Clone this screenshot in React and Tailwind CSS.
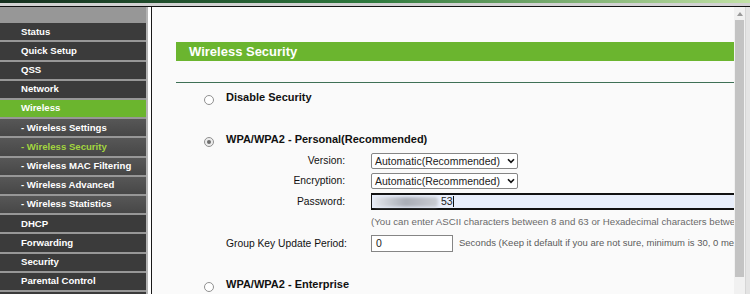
import React from 'react'

const MENU = [
  { label: 'Status' },
  { label: 'Quick Setup' },
  { label: 'QSS' },
  { label: 'Network' },
  { label: 'Wireless', active: true },
  { label: '- Wireless Settings', sub: true },
  { label: '- Wireless Security', sub: true, current: true },
  { label: '- Wireless MAC Filtering', sub: true },
  { label: '- Wireless Advanced', sub: true },
  { label: '- Wireless Statistics', sub: true },
  { label: 'DHCP' },
  { label: 'Forwarding' },
  { label: 'Security' },
  { label: 'Parental Control' },
  { label: '' },
]

function MenuItem({ item }) {
  let bg = 'bg-[#3b3b3b]'
  if (item.active) bg = 'bg-[#6bb52e]'
  else if (item.sub) bg = 'bg-gradient-to-b from-[#575757] to-[#474747]'
  return (
    <div className={`h-[19.2px] shrink-0 border-t-2 border-[#979797] flex items-center pl-[21px] ${bg}`}>
      <span
        className={`text-[9.6px] font-bold whitespace-nowrap ${item.current ? 'text-[#a3d63f]' : 'text-white'}`}
      >
        {item.label}
      </span>
    </div>
  )
}

function Radio({ checked }) {
  return (
    <div
      className={`mt-[5px] w-[10px] h-[10px] shrink-0 rounded-full border border-[#909090] flex items-center justify-center ${
        checked ? 'bg-[#ececec]' : 'bg-white'
      }`}
    >
      {checked && <div className="w-[4px] h-[4px] rounded-full bg-[#6e6e6e]" />}
    </div>
  )
}

function FakeSelect() {
  return (
    <div className="w-[147px] h-[16px] shrink-0 border border-[#858585] rounded-[2px] bg-white flex items-center justify-between pl-[3px] pr-[2px]">
      <span className="text-[10.5px] text-[#222] leading-none">Automatic(Recommended)</span>
      <svg width="8" height="6" viewBox="0 0 8 6">
        <path d="M1 1.2 L4 4.3 L7 1.2" fill="none" stroke="#111" strokeWidth="1.6" />
      </svg>
    </div>
  )
}

function FormRow({ label, children, h }) {
  return (
    <div className={`flex items-center ${h}`}>
      <div className="w-[119px] shrink-0 text-right text-[10.3px] text-[#111] whitespace-nowrap">{label}</div>
      <div className="ml-[26px] flex items-center">{children}</div>
    </div>
  )
}

export default function App() {
  return (
    <div className="w-[750px] h-[294px] overflow-hidden bg-[#fafafa] flex flex-col font-['Liberation_Sans',Arial,sans-serif]">
      {/* top strip */}
      <div className="h-[3px] shrink-0 bg-gradient-to-r from-[#16301f] via-[#2e7a3e] to-[#c2e2a6]" />
      <div className="h-[3px] shrink-0 bg-[#d2d2d2]" />
      <div className="h-px shrink-0 bg-[#111]" />

      <div className="flex flex-1 min-h-0">
        {/* sidebar */}
        <aside className="w-[146px] shrink-0 flex flex-col bg-[#3b3b3b] overflow-hidden">
          <div className="h-[14.3px] shrink-0 bg-[#979797]" />
          {MENU.map((item, i) => (
            <MenuItem key={i} item={item} />
          ))}
        </aside>
        <div className="w-[2px] shrink-0 bg-[#b4b4b4]" />
        <div className="w-[3px] shrink-0 bg-white" />
        <div className="w-px shrink-0 bg-[#1a1a1a]" />

        {/* main */}
        <main className="flex-1 min-w-0 overflow-hidden bg-[#fafafa] pl-[24px]">
          <div className="w-[620px]">
            <div className="mt-[35px] h-[19px] bg-[#6bb52f] flex items-center pl-[13px]">
              <span className="text-[13px] font-bold text-white">Wireless Security</span>
            </div>
            <div className="mt-[21px] h-px bg-[#3e7056]" />

            <div className="mt-[7px] ml-[28px] flex items-start gap-[12px]">
              <Radio />
              <span className="text-[11px] leading-[14px] font-bold text-[#111]">Disable Security</span>
            </div>

            <div className="mt-[27px] ml-[28px] flex items-start gap-[12px]">
              <Radio checked />
              <span className="text-[11px] leading-[14px] font-bold text-[#111]">WPA/WPA2 - Personal(Recommended)</span>
            </div>

            <div className="mt-[6px] ml-[50px]">
              <FormRow label="Version:" h="h-[16px]">
                <FakeSelect />
              </FormRow>
              <FormRow label="Encryption:" h="h-[16px] mt-[4px]">
                <FakeSelect />
              </FormRow>
              <FormRow label="Password:" h="h-[17px] mt-[4px]">
                <div className="w-[400px] h-[17px] shrink-0 border-t-2 border-b-2 border-l border-[#111] bg-[#e8eefb] flex items-center pl-[2px]">
                  <div className="w-[64px] h-[10px] rounded-[3px] bg-gradient-to-r from-[#e3e6ec] via-[#a9adb6] to-[#c9ccd3] blur-[1.5px]" />
                  <span className="ml-[3px] text-[10.5px] text-[#222] leading-none">53</span>
                  <span className="w-px h-[11px] bg-[#111]" />
                </div>
              </FormRow>
              <div className="h-[25px] flex items-center pl-[145px]">
                <span className="text-[9.7px] text-[#6a6a6a] whitespace-nowrap">
                  (You can enter ASCII characters between 8 and 63 or Hexadecimal characters between 8 and 64.)
                </span>
              </div>
              <FormRow label="Group Key Update Period:" h="h-[17px]">
                <div className="w-[82px] h-[17px] shrink-0 border border-[#858585] bg-white flex items-center pl-[4px]">
                  <span className="text-[10.5px] text-[#222] leading-none">0</span>
                </div>
                <span className="ml-[6px] text-[9.5px] text-[#5a5a5a] whitespace-nowrap">
                  Seconds (Keep it default if you are not sure, minimum is 30, 0 means no update)
                </span>
              </FormRow>
            </div>

            <div className="mt-[25px] ml-[28px] flex items-start gap-[12px]">
              <Radio />
              <span className="text-[11px] leading-[14px] font-bold text-[#111]">WPA/WPA2 - Enterprise</span>
            </div>
          </div>
        </main>

        {/* scrollbar */}
        <div className="w-[16px] shrink-0 flex bg-[#f1f1f1]">
          <div className="w-[11px] flex flex-col items-center">
            <div className="h-[13px] flex items-center justify-center">
              <svg width="6" height="4" viewBox="0 0 6 4">
                <path d="M0 4 L3 0 L6 4 Z" fill="#9a9a9a" />
              </svg>
            </div>
            <div className="w-[9px] h-[257px] bg-[#c3c3c3]" />
          </div>
          <div className="w-[5px] bg-[#e4e4e4] border-l border-[#d6d6d6]" />
        </div>
      </div>
    </div>
  )
}
